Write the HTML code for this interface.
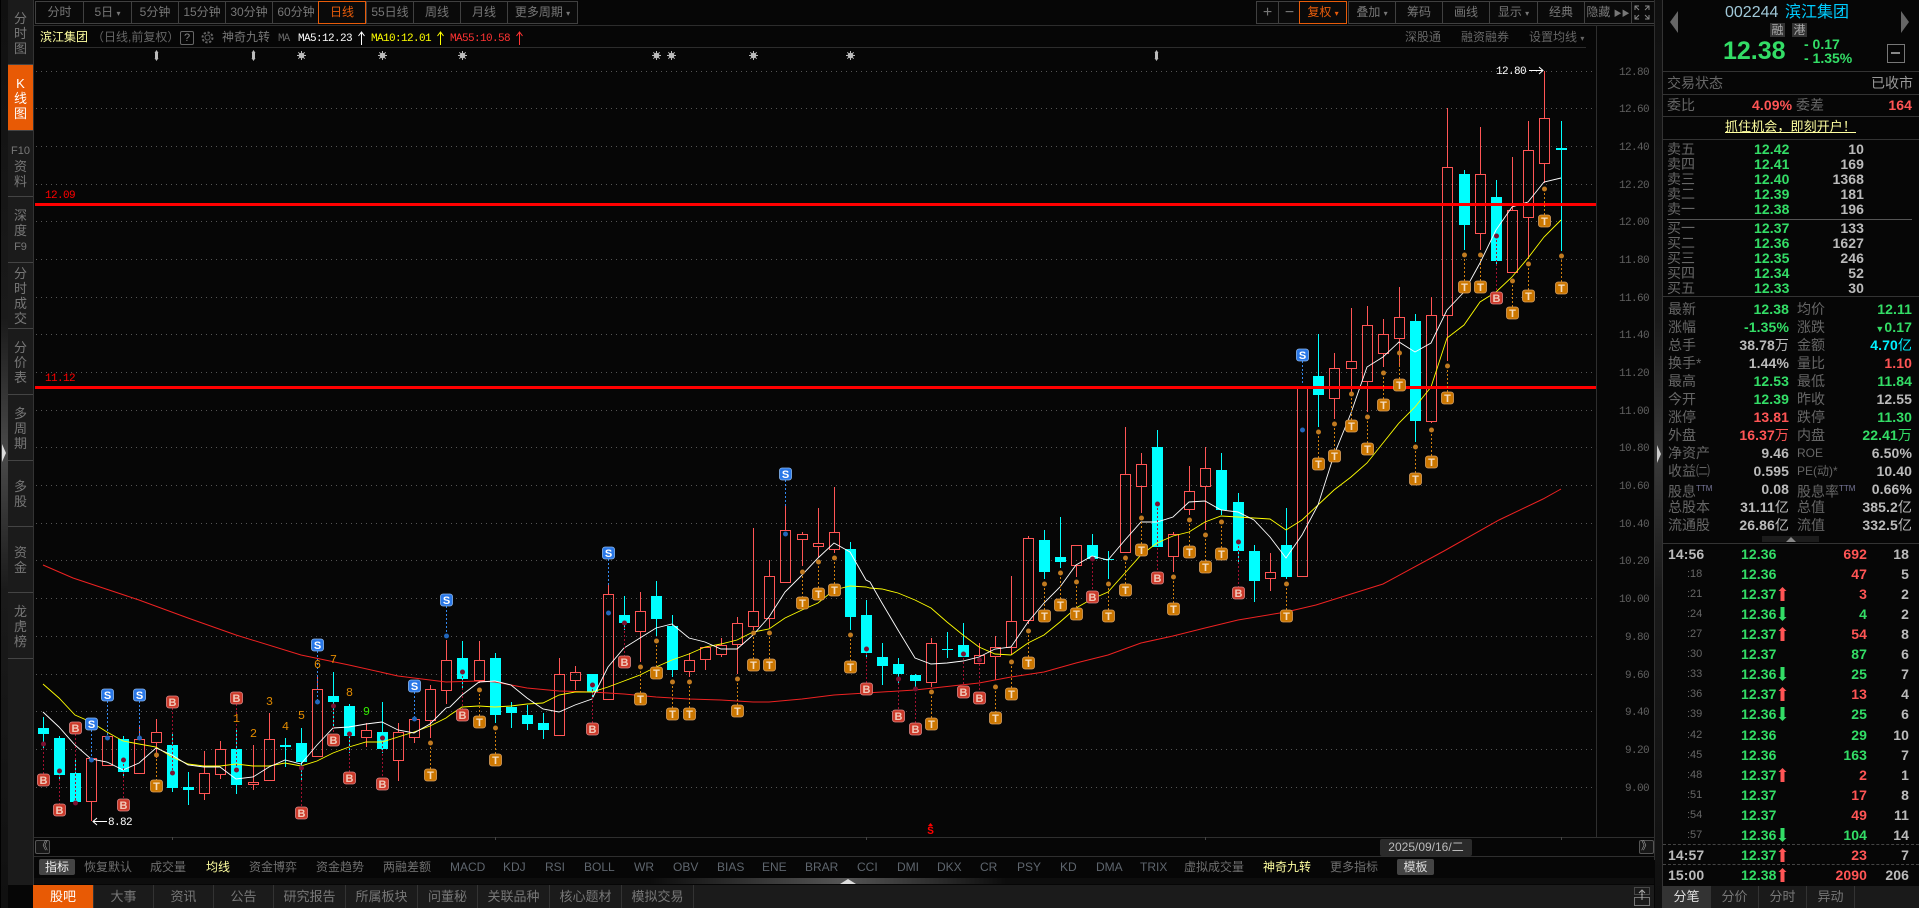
<!DOCTYPE html>
<html lang="zh-CN"><head><meta charset="utf-8"><title>滨江集团</title>
<style>
html,body{margin:0;padding:0;background:#060606;width:1919px;height:908px;overflow:hidden}
body{position:relative;font-family:"Liberation Sans","WenQuanYi Zen Hei","Noto Sans CJK SC",sans-serif;font-size:12px;color:#777}
div,span{position:absolute;white-space:nowrap}
.btn{top:1px;height:21px;line-height:21px;text-align:center;border:1px solid #404040;border-right:0;box-sizing:content-box;color:#777;font-size:12px;background:#0a0a0a}
.on{border:1px solid #e85c0a;color:#e85c0a;z-index:2}
.side{left:8px;width:25px;text-align:center;line-height:15px;font-size:13px;color:#777;background:#1b1b1b;border-bottom:1px solid #444;box-sizing:border-box}
.side b{font-weight:normal;font-size:11px}
.ind{top:860px;line-height:14px;font-size:12px;color:#6f6f6f}
.lat{color:#5f666e}
.tab{top:885px;height:23px;line-height:23px;text-align:center;border-right:1px solid #333;box-sizing:border-box;font-size:13px;color:#777}
.p{line-height:18px;font-size:14px}
.l{color:#666;font-size:14px}
.n{font-weight:bold;color:#bbb;letter-spacing:.1px}
.g{color:#33dd66}.rd{color:#ff5555}.c{color:#00f0ff}
.ln{left:1663px;width:256px;height:1px;background:#333}
.bl{left:1667px;color:#666;font-size:14px;line-height:15px}
svg text{font-family:"Liberation Mono","WenQuanYi Zen Hei",monospace}
.ax text{fill:#606060;font-size:11px;letter-spacing:-.6px}
.tag text{font-family:"Liberation Sans",sans-serif;font-size:11px;font-weight:bold;text-anchor:middle}
</style></head><body>

<!-- far-left strip -->
<div style="left:0;top:0;width:1px;height:908px;background:#000"></div>
<div style="left:1px;top:0;width:7px;height:908px;background:linear-gradient(#101010,#1a1a1a 35%,#4a4a4a 50%,#1a1a1a 65%,#101010)"></div>
<svg style="position:absolute;left:0;top:440px" width="8" height="26"><path d="M2 4 L6 13 L2 22Z" fill="#ddd"/></svg>

<!-- side tabs -->
<div class="side" style="top:0;height:65px;padding-top:11px">分<br>时<br>图</div>
<div class="side" style="top:65px;height:66px;padding-top:11px;background:#e85a05;color:#fff">K<br>线<br>图</div>
<div class="side" style="top:131px;height:66px;padding-top:11px"><b>F10</b><br>资<br>料</div>
<div class="side" style="top:197px;height:66px;padding-top:11px">深<br>度<br><b>F9</b></div>
<div class="side" style="top:263px;height:66px;padding-top:3px">分<br>时<br>成<br>交</div>
<div class="side" style="top:329px;height:66px;padding-top:11px">分<br>价<br>表</div>
<div class="side" style="top:395px;height:66px;padding-top:11px">多<br>周<br>期</div>
<div class="side" style="top:461px;height:66px;padding-top:18px">多<br>股</div>
<div class="side" style="top:527px;height:66px;padding-top:18px">资<br>金</div>
<div class="side" style="top:593px;height:66px;padding-top:11px">龙<br>虎<br>榜</div>
<div class="side" style="top:659px;height:226px;border:0"></div>
<div style="left:33px;top:0;width:1px;height:885px;background:#333"></div>

<!-- top bars -->
<div style="left:34px;top:25px;width:1620px;height:1px;background:#2c2c2c"></div>
<div class="btn" style="left:35px;width:47px">分时</div>
<div class="btn" style="left:83px;width:47px">5日 <small style="font-size:8px">▾</small></div>
<div class="btn" style="left:131px;width:46px">5分钟</div>
<div class="btn" style="left:178px;width:46px">15分钟</div>
<div class="btn" style="left:225px;width:46px">30分钟</div>
<div class="btn" style="left:272px;width:46px">60分钟</div>
<div class="btn on" style="left:318px;width:46px">日线</div>
<div class="btn" style="left:366px;width:46px">55日线</div>
<div class="btn" style="left:413px;width:46px">周线</div>
<div class="btn" style="left:460px;width:46px">月线</div>
<div class="btn" style="left:507px;width:69px;border-right:1px solid #404040">更多周期 <small style="font-size:8px">▾</small></div>

<div class="btn" style="left:1256px;width:21px;font-size:16px">+</div>
<div class="btn" style="left:1278px;width:21px;font-size:16px">−</div>
<div class="btn on" style="left:1299px;width:46px">复权 <small style="font-size:8px">▾</small></div>
<div class="btn" style="left:1348px;width:46px">叠加 <small style="font-size:8px">▾</small></div>
<div class="btn" style="left:1395px;width:46px">筹码</div>
<div class="btn" style="left:1442px;width:46px">画线</div>
<div class="btn" style="left:1489px;width:47px">显示 <small style="font-size:8px">▾</small></div>
<div class="btn" style="left:1537px;width:46px">经典</div>
<div class="btn" style="left:1584px;width:46px">隐藏 <small style="font-size:8px">▶▶</small></div>
<div class="btn" style="left:1631px;width:22px;border-right:1px solid #404040"></div>
<svg style="position:absolute;left:1634px;top:5px" width="16" height="15" fill="none" stroke="#888"><path d="M1 5V1H5M11 1H15V5M15 10V14H11M5 14H1V10M1 1L5 5M15 1L11 5M15 14L11 10M1 14L5 10"/></svg>

<!-- second row -->
<div style="left:40px;top:30px;line-height:15px;font-size:12px;color:#ffffa0">滨江集团</div>
<div style="left:92px;top:30px;line-height:15px;font-size:12px;color:#666">（日线,前复权）</div>
<div style="left:180px;top:31px;width:12px;height:12px;border:1px solid #666;border-radius:2px;line-height:12px;text-align:center;color:#888;font-size:11px">?</div>
<svg style="position:absolute;left:200px;top:30px" width="15" height="15" fill="none" stroke="#666"><circle cx="7.5" cy="7.5" r="2.5"/><circle cx="7.5" cy="7.5" r="5" stroke-width="2" stroke-dasharray="2.2 1.7"/></svg>
<div style="left:222px;top:30px;line-height:15px;font-size:12px;color:#777">神奇九转</div>
<div style="left:1405px;top:30px;line-height:15px;font-size:12px;color:#666">深股通</div>
<div style="left:1461px;top:30px;line-height:15px;font-size:12px;color:#666">融资融券</div>
<div style="left:1529px;top:30px;line-height:15px;font-size:12px;color:#666">设置均线 <small style="font-size:8px">▾</small></div>
<div style="left:40px;top:47px;width:1546px;height:1px;background:#2c2c2c"></div>

<!-- chart -->
<svg style="position:absolute;left:0;top:0" width="1660" height="860" shape-rendering="crispEdges">
<g fill="#606060" font-size="11"><text x="278" y="41" fill="#666" font-size="11" letter-spacing="-1">MA</text></g>
<text x="298" y="41" fill="#fff" font-size="11" letter-spacing="-.6">MA5:12.23</text>
<text x="371" y="41" fill="#ff0" font-size="11" letter-spacing="-.6">MA10:12.01</text>
<text x="450" y="41" fill="#f33" font-size="11" letter-spacing="-.6">MA55:10.58</text>
<g fill="none" shape-rendering="auto"><path d="M361.5 45V32M358.5 36L361.5 32L364.5 36" stroke="#fff"/><path d="M440.5 45V32M437.5 36L440.5 32L443.5 36" stroke="#ff0"/><path d="M519.5 45V32M516.5 36L519.5 32L522.5 36" stroke="#f33"/></g>

<!-- grid -->
<path stroke="#555" stroke-dasharray="1 4" fill="none" d="M36 71.5H1600M36 108.5H1600M36 146.5H1600M36 184.5H1600M36 221.5H1600M36 259.5H1600M36 297.5H1600M36 334.5H1600M36 372.5H1600M36 410.5H1600M36 447.5H1600M36 485.5H1600M36 523.5H1600M36 560.5H1600M36 598.5H1600M36 636.5H1600M36 674.5H1600M36 711.5H1600M36 749.5H1600M36 787.5H1600"/>
<path stroke="#2e2e2e" d="M1596.5 26V837M34 837.5H1654M34 856.5H1654M34 877.5H1654M34 884.5H1654M1654.5 0V908"/>
<path stroke="#444" d="M172.5 837V840M495.5 837V840M866.5 837V840M1205.5 837V840M1561.5 837V840"/>

<g class="ax">
<text x="1619" y="75">12.80</text><text x="1619" y="112">12.60</text><text x="1619" y="150">12.40</text><text x="1619" y="188">12.20</text><text x="1619" y="225">12.00</text><text x="1619" y="263">11.80</text><text x="1619" y="301">11.60</text><text x="1619" y="338">11.40</text><text x="1619" y="376">11.20</text><text x="1619" y="414">11.00</text><text x="1619" y="451">10.80</text><text x="1619" y="489">10.60</text><text x="1619" y="527">10.40</text><text x="1619" y="564">10.20</text><text x="1619" y="602">10.00</text><text x="1625" y="640">9.80</text><text x="1625" y="678">9.60</text><text x="1625" y="715">9.40</text><text x="1625" y="753">9.20</text><text x="1625" y="791">9.00</text>
</g>

<!-- red candles -->
<path fill="none" stroke="#ff5555" d="
M91.5 801V821M86.5 758.5H96.5V801.5H86.5Z
M102.5 736.5H112.5V765.5H102.5Z
M139.5 726V739M134.5 739.5H144.5V773.5H134.5Z
M156.5 719V732M156.5 742V758M151.5 732.5H161.5V742.5H151.5Z
M204.5 751V773M204.5 793V800M199.5 773.5H209.5V793.5H199.5Z
M220.5 741V749M220.5 774V779M215.5 749.5H225.5V774.5H215.5Z
M253.5 745V782M253.5 784V790M248.5 782.5H258.5V784.5H248.5Z
M269.5 713V739M264.5 739.5H274.5V780.5H264.5Z
M317.5 677V689M312.5 689.5H322.5V756.5H312.5Z
M366.5 723V730M366.5 737V747M361.5 730.5H371.5V737.5H361.5Z
M398.5 723V732M398.5 760V781M393.5 732.5H403.5V760.5H393.5Z
M414.5 737V743M409.5 719.5H419.5V737.5H409.5Z
M430.5 685V689M430.5 720V738M425.5 689.5H435.5V720.5H425.5Z
M446.5 640V660M446.5 690V704M441.5 660.5H451.5V690.5H441.5Z
M479.5 641V660M479.5 680V683M474.5 660.5H484.5V680.5H474.5Z
M559.5 658V674M554.5 674.5H564.5V735.5H554.5Z
M575.5 666V672M575.5 680V690M570.5 672.5H580.5V680.5H570.5Z
M608.5 585V594M603.5 594.5H613.5V699.5H603.5Z
M640.5 592V611M640.5 631V662M635.5 611.5H645.5V631.5H635.5Z
M689.5 653V660M689.5 671V677M684.5 660.5H694.5V671.5H684.5Z
M705.5 659V670M700.5 647.5H710.5V659.5H700.5Z
M721.5 638V645M721.5 654V657M716.5 645.5H726.5V654.5H716.5Z
M737.5 617V623M737.5 644V674M732.5 623.5H742.5V644.5H732.5Z
M753.5 528V611M753.5 626V630M748.5 611.5H758.5V626.5H748.5Z
M769.5 560V576M769.5 618V628M764.5 576.5H774.5V618.5H764.5Z
M785.5 506V530M785.5 582V583M780.5 530.5H790.5V582.5H780.5Z
M802.5 532V534M802.5 539V566M797.5 534.5H807.5V539.5H797.5Z
M818.5 508V543M818.5 546V557M813.5 543.5H823.5V546.5H813.5Z
M834.5 487V532M834.5 549V553M829.5 532.5H839.5V549.5H829.5Z
M931.5 638V643M931.5 682V687M926.5 643.5H936.5V682.5H926.5Z
M979.5 643V655M974.5 655.5H984.5V663.5H974.5Z
M995.5 636V647M995.5 656V680M990.5 647.5H1000.5V656.5H990.5Z
M1011.5 576V621M1011.5 647V655M1006.5 621.5H1016.5V647.5H1006.5Z
M1028.5 536V538M1028.5 620V624M1023.5 538.5H1033.5V620.5H1023.5Z
M1076.5 565V577M1071.5 545.5H1081.5V565.5H1071.5Z
M1125.5 427V474M1120.5 474.5H1130.5V552.5H1120.5Z
M1141.5 453V464M1141.5 486V513M1136.5 464.5H1146.5V486.5H1136.5Z
M1173.5 532V534M1173.5 556V572M1168.5 534.5H1178.5V556.5H1168.5Z
M1189.5 466V491M1189.5 509V515M1184.5 491.5H1194.5V509.5H1184.5Z
M1205.5 447V468M1205.5 486V530M1200.5 468.5H1210.5V486.5H1200.5Z
M1270.5 553V572M1270.5 578V591M1265.5 572.5H1275.5V578.5H1265.5Z
M1297.5 386.5H1307.5V576.5H1297.5Z
M1334.5 353V368M1334.5 398V419M1329.5 368.5H1339.5V398.5H1329.5Z
M1351.5 308V361M1351.5 368V393M1346.5 361.5H1356.5V368.5H1346.5Z
M1367.5 306V325M1367.5 381V412M1362.5 325.5H1372.5V381.5H1362.5Z
M1383.5 319V334M1383.5 353V367M1378.5 334.5H1388.5V353.5H1378.5Z
M1399.5 287V317M1399.5 338V367M1394.5 317.5H1404.5V338.5H1394.5Z
M1431.5 297V315M1431.5 421V423M1426.5 315.5H1436.5V421.5H1426.5Z
M1447.5 108V167M1447.5 315V361M1442.5 167.5H1452.5V315.5H1442.5Z
M1480.5 127V174M1480.5 233V250M1475.5 174.5H1485.5V233.5H1475.5Z
M1512.5 157V210M1507.5 210.5H1517.5V272.5H1507.5Z
M1528.5 121V150M1528.5 217V259M1523.5 150.5H1533.5V217.5H1523.5Z
M1544.5 71V118M1544.5 163V183M1539.5 118.5H1549.5V163.5H1539.5Z"/>

<!-- cyan candles -->
<path fill="none" stroke="#00ffff" d="M43.5 717V749M59.5 736V779M75.5 760V803M123.5 736V777M172.5 734V792M188.5 772V805M236.5 730V794M285.5 738V767M301.5 728V781M333.5 672V728M349.5 704V753M382.5 702V753M462.5 641V690M495.5 653V723M511.5 702V728M527.5 705V730M543.5 713V739M592.5 674V698M624.5 596V630M656.5 581V636M672.5 615V677M850.5 542V630M866.5 600V657M882.5 643V685M898.5 658V685M915.5 674V690M947.5 632V658M963.5 623V657M1044.5 530V579M1060.5 517V568M1092.5 534V560M1108.5 551V579M1157.5 430V547M1221.5 453V515M1238.5 493V562M1254.5 545V602M1286.5 508V579M1318.5 334V427M1415.5 314V442M1464.5 170V250M1496.5 180V266M1561.5 121V251"/>
<path fill="#00ffff" d="M38 728h11v6h-11zM54 738h11v37h-11zM70 773h11v29h-11zM118 739h11v33h-11zM167 745h11v43h-11zM183 787h11v3h-11zM231 749h11v36h-11zM280 745h11v2h-11zM296 743h11v19h-11zM328 696h11v6h-11zM344 706h11v30h-11zM377 732h11v17h-11zM457 658h11v21h-11zM490 658h11v57h-11zM506 707h11v6h-11zM522 715h11v9h-11zM538 723h11v7h-11zM587 674h11v18h-11zM619 615h11v8h-11zM651 596h11v23h-11zM667 626h11v44h-11zM845 549h11v68h-11zM861 615h11v38h-11zM877 657h11v9h-11zM893 664h11v10h-11zM910 675h11v6h-11zM942 649h11v1h-11zM958 645h11v12h-11zM1039 540h11v32h-11zM1055 557h11v5h-11zM1087 545h11v14h-11zM1103 559h11v1h-11zM1152 447h11v100h-11zM1216 470h11v40h-11zM1233 502h11v49h-11zM1249 551h11v30h-11zM1281 545h11v32h-11zM1313 376h11v19h-11zM1410 321h11v100h-11zM1459 174h11v51h-11zM1491 197h11v64h-11zM1556 148h11v2h-11z"/>

<!-- MAs -->
<g fill="none" shape-rendering="auto">
<polyline stroke="#ee2222" stroke-width="1" points="43,565 73,578 139,600 188,618 236,635 301,655 349,665 398,676 446,682 479,681 495,682 527,688 559,691 592,692 624,694 656,697 689,699 721,700 753,702 769,702 802,699 834,695 866,693 915,690 979,683 1011,677 1044,672 1076,663 1108,655 1141,643 1173,636 1205,628 1238,620 1286,612 1316,605 1383,584 1444,551 1499,520 1543,499 1561,489"/>
<polyline stroke="#ffff00" stroke-width=".9" points="43,684 59,698 75,715 91,722 107,732 123,741 139,744 156,747 172,757 188,764 204,766 220,766 236,764 253,766 269,766 285,763 301,766 317,761 333,753 349,747 366,742 382,742 398,737 414,732 430,726 446,718 450,715 462,707 479,706 495,707 511,706 527,704 543,703 559,695 575,692 592,692 608,687 624,681 640,675 656,667 672,660 689,654 705,647 721,644 737,640 753,632 769,629 785,618 802,610 818,603 834,590 850,586 866,587 870,588 882,589 898,593 915,600 931,608 947,622 963,635 979,647 995,654 1011,655 1028,643 1044,635 1060,622 1076,608 1092,599 1108,592 1125,573 1141,555 1157,543 1173,536 1189,532 1205,522 1221,516 1238,517 1254,518 1270,519 1286,530 1302,520 1318,505 1334,490 1351,477 1367,463 1383,443 1399,423 1415,407 1431,387 1447,338 1464,325 1480,302 1496,292 1512,277 1528,258 1544,237 1561,220"/>
<polyline stroke="#ffffff" stroke-width=".9" points="43,712 59,727 75,745 91,759 107,762 123,770 139,763 156,748 172,755 188,765 204,767 220,767 236,779 253,777 269,767 285,760 301,764 317,745 333,728 349,727 366,724 382,722 398,730 414,733 430,724 446,708 450,707 462,695 479,682 495,681 511,685 527,698 543,709 559,712 575,705 592,699 608,667 624,648 640,638 656,628 672,624 689,638 705,642 721,649 737,649 753,635 769,617 785,592 802,575 818,558 834,543 850,552 866,580 870,582 882,603 898,630 915,658 931,664 947,663 963,661 979,657 995,649 1011,647 1028,622 1044,603 1060,587 1076,565 1092,556 1108,560 1125,540 1141,522 1157,522 1173,517 1189,502 1205,501 1221,510 1238,512 1254,520 1270,537 1286,558 1302,535 1318,505 1334,455 1351,413 1367,367 1383,357 1399,342 1415,352 1431,343 1447,310 1464,292 1480,263 1496,230 1512,207 1528,202 1544,182 1561,178"/>
</g>

<!-- levels -->
<rect x="35" y="203" width="1561" height="3" fill="#ff0000"/>
<rect x="35" y="386" width="1561" height="3" fill="#ff0000"/>
<text x="45" y="198" fill="#f00" font-size="11" letter-spacing="-.6">12.09</text>
<text x="45" y="381" fill="#f00" font-size="11" letter-spacing="-.6">11.12</text>

<!-- marker connectors -->
<g fill="none" stroke-dasharray="2 2">
<path stroke="#a01030" d="M43.5 744V774M59.5 771V804M75.5 734V803M123.5 760V799M172.5 708V773M236.5 704V770M301.5 768V807M333.5 706V734M349.5 734V772M382.5 738V778M462.5 672V709M592.5 685V723M624.5 623V656M866.5 649V683M898.5 679V710M915.5 689V723M963.5 654V686M979.5 660V692M1092.5 559V591M1157.5 504V572M1238.5 542V587M1496.5 236V292"/>
<path stroke="#d08010" d="M156.5 755V780M430.5 743V769M479.5 690V716M495.5 728V754M640.5 667V693M656.5 641V667M672.5 682V708M689.5 682V708M737.5 679V705M753.5 633V659M769.5 633V659M802.5 572V597M818.5 562V588M834.5 558V584M850.5 635V661M931.5 692V718M995.5 687V712M1011.5 662V688M1028.5 631V657M1044.5 584V610M1060.5 573V599M1076.5 582V608M1108.5 584V610M1125.5 558V584M1141.5 518V544M1173.5 577V603M1189.5 520V546M1205.5 535V561M1221.5 522V548M1286.5 584V610M1318.5 432V458M1334.5 424V450M1351.5 394V420M1367.5 417V443M1383.5 373V399M1399.5 353V379M1415.5 447V473M1431.5 430V456M1447.5 366V392M1464.5 255V281M1480.5 255V281M1512.5 281V307M1528.5 264V290M1544.5 189V215M1561.5 256V282"/>
<path stroke="#3388ee" d="M91.5 730V760M107.5 701V738M139.5 701V738M317.5 651V702M414.5 692V719M446.5 606V636M608.5 559V585M785.5 480V506M1302.5 361V383"/>
</g>
<g shape-rendering="auto">
<g fill="#7a1030"><circle cx="43.5" cy="744" r="2.5"/><circle cx="59.5" cy="771" r="2.5"/><circle cx="75.5" cy="803" r="2.5"/><circle cx="123.5" cy="760" r="2.5"/><circle cx="172.5" cy="773" r="2.5"/><circle cx="236.5" cy="770" r="2.5"/><circle cx="301.5" cy="768" r="2.5"/><circle cx="333.5" cy="706" r="2.5"/><circle cx="349.5" cy="734" r="2.5"/><circle cx="382.5" cy="738" r="2.5"/><circle cx="462.5" cy="672" r="2.5"/><circle cx="592.5" cy="685" r="2.5"/><circle cx="624.5" cy="623" r="2.5"/><circle cx="866.5" cy="649" r="2.5"/><circle cx="898.5" cy="679" r="2.5"/><circle cx="915.5" cy="689" r="2.5"/><circle cx="963.5" cy="654" r="2.5"/><circle cx="979.5" cy="660" r="2.5"/><circle cx="1092.5" cy="559" r="2.5"/><circle cx="1157.5" cy="504" r="2.5"/><circle cx="1238.5" cy="542" r="2.5"/><circle cx="1496.5" cy="236" r="2.5"/></g>
<g fill="#c07a20"><circle cx="156.5" cy="755" r="2.5"/><circle cx="430.5" cy="743" r="2.5"/><circle cx="479.5" cy="690" r="2.5"/><circle cx="495.5" cy="728" r="2.5"/><circle cx="640.5" cy="667" r="2.5"/><circle cx="656.5" cy="641" r="2.5"/><circle cx="672.5" cy="682" r="2.5"/><circle cx="689.5" cy="682" r="2.5"/><circle cx="737.5" cy="679" r="2.5"/><circle cx="753.5" cy="633" r="2.5"/><circle cx="769.5" cy="633" r="2.5"/><circle cx="802.5" cy="572" r="2.5"/><circle cx="818.5" cy="562" r="2.5"/><circle cx="834.5" cy="558" r="2.5"/><circle cx="850.5" cy="635" r="2.5"/><circle cx="931.5" cy="692" r="2.5"/><circle cx="995.5" cy="687" r="2.5"/><circle cx="1011.5" cy="662" r="2.5"/><circle cx="1028.5" cy="631" r="2.5"/><circle cx="1044.5" cy="584" r="2.5"/><circle cx="1060.5" cy="573" r="2.5"/><circle cx="1076.5" cy="582" r="2.5"/><circle cx="1108.5" cy="584" r="2.5"/><circle cx="1125.5" cy="558" r="2.5"/><circle cx="1141.5" cy="518" r="2.5"/><circle cx="1173.5" cy="577" r="2.5"/><circle cx="1189.5" cy="520" r="2.5"/><circle cx="1205.5" cy="535" r="2.5"/><circle cx="1221.5" cy="522" r="2.5"/><circle cx="1286.5" cy="584" r="2.5"/><circle cx="1318.5" cy="432" r="2.5"/><circle cx="1334.5" cy="424" r="2.5"/><circle cx="1351.5" cy="394" r="2.5"/><circle cx="1367.5" cy="417" r="2.5"/><circle cx="1383.5" cy="373" r="2.5"/><circle cx="1399.5" cy="353" r="2.5"/><circle cx="1415.5" cy="447" r="2.5"/><circle cx="1431.5" cy="430" r="2.5"/><circle cx="1447.5" cy="366" r="2.5"/><circle cx="1464.5" cy="255" r="2.5"/><circle cx="1480.5" cy="255" r="2.5"/><circle cx="1512.5" cy="281" r="2.5"/><circle cx="1528.5" cy="264" r="2.5"/><circle cx="1544.5" cy="189" r="2.5"/><circle cx="1561.5" cy="256" r="2.5"/></g>
<g fill="#2266bb"><circle cx="91.5" cy="760" r="2.5"/><circle cx="107.5" cy="738" r="2.5"/><circle cx="139.5" cy="738" r="2.5"/><circle cx="317.5" cy="702" r="2.5"/><circle cx="414.5" cy="719" r="2.5"/><circle cx="446.5" cy="636" r="2.5"/><circle cx="608.5" cy="613" r="2.5"/><circle cx="785.5" cy="534" r="2.5"/><circle cx="1302.5" cy="430" r="2.5"/></g>
<defs>
<rect id="rB" x="-6" y="-6" width="12" height="12" rx="2.5" fill="#cc3a2a" stroke="#d88" stroke-width=".8"/>
<rect id="rT" x="-6" y="-6" width="12" height="12" rx="2.5" fill="#cc7700" stroke="#d9a060" stroke-width=".8"/>
<rect id="rS" x="-6" y="-6" width="12" height="12" rx="2.5" fill="#2a78e8" stroke="#8ab8f0" stroke-width=".8"/>
</defs>
<g class="tag" fill="#f0c8b8">
<use href="#rB" x="43.5" y="780"/><text x="43.5" y="784">B</text>
<use href="#rB" x="59.5" y="810"/><text x="59.5" y="814">B</text>
<use href="#rB" x="75.5" y="728"/><text x="75.5" y="732">B</text>
<use href="#rB" x="123.5" y="805"/><text x="123.5" y="809">B</text>
<use href="#rB" x="172.5" y="702"/><text x="172.5" y="706">B</text>
<use href="#rB" x="236.5" y="698"/><text x="236.5" y="702">B</text>
<use href="#rB" x="301.5" y="813"/><text x="301.5" y="817">B</text>
<use href="#rB" x="333.5" y="740"/><text x="333.5" y="744">B</text>
<use href="#rB" x="349.5" y="778"/><text x="349.5" y="782">B</text>
<use href="#rB" x="382.5" y="784"/><text x="382.5" y="788">B</text>
<use href="#rB" x="462.5" y="715"/><text x="462.5" y="719">B</text>
<use href="#rB" x="592.5" y="729"/><text x="592.5" y="733">B</text>
<use href="#rB" x="624.5" y="662"/><text x="624.5" y="666">B</text>
<use href="#rB" x="866.5" y="689"/><text x="866.5" y="693">B</text>
<use href="#rB" x="898.5" y="716"/><text x="898.5" y="720">B</text>
<use href="#rB" x="915.5" y="729"/><text x="915.5" y="733">B</text>
<use href="#rB" x="963.5" y="692"/><text x="963.5" y="696">B</text>
<use href="#rB" x="979.5" y="698"/><text x="979.5" y="702">B</text>
<use href="#rB" x="1092.5" y="597"/><text x="1092.5" y="601">B</text>
<use href="#rB" x="1157.5" y="578"/><text x="1157.5" y="582">B</text>
<use href="#rB" x="1238.5" y="593"/><text x="1238.5" y="597">B</text>
<use href="#rB" x="1496.5" y="298"/><text x="1496.5" y="302">B</text>
</g>
<g class="tag" fill="#f5dcc0">
<use href="#rT" x="156.5" y="786"/><text x="156.5" y="790">T</text>
<use href="#rT" x="430.5" y="775"/><text x="430.5" y="779">T</text>
<use href="#rT" x="479.5" y="722"/><text x="479.5" y="726">T</text>
<use href="#rT" x="495.5" y="760"/><text x="495.5" y="764">T</text>
<use href="#rT" x="640.5" y="699"/><text x="640.5" y="703">T</text>
<use href="#rT" x="656.5" y="673"/><text x="656.5" y="677">T</text>
<use href="#rT" x="672.5" y="714"/><text x="672.5" y="718">T</text>
<use href="#rT" x="689.5" y="714"/><text x="689.5" y="718">T</text>
<use href="#rT" x="737.5" y="711"/><text x="737.5" y="715">T</text>
<use href="#rT" x="753.5" y="665"/><text x="753.5" y="669">T</text>
<use href="#rT" x="769.5" y="665"/><text x="769.5" y="669">T</text>
<use href="#rT" x="802.5" y="603"/><text x="802.5" y="607">T</text>
<use href="#rT" x="818.5" y="594"/><text x="818.5" y="598">T</text>
<use href="#rT" x="834.5" y="590"/><text x="834.5" y="594">T</text>
<use href="#rT" x="850.5" y="667"/><text x="850.5" y="671">T</text>
<use href="#rT" x="931.5" y="724"/><text x="931.5" y="728">T</text>
<use href="#rT" x="995.5" y="718"/><text x="995.5" y="722">T</text>
<use href="#rT" x="1011.5" y="694"/><text x="1011.5" y="698">T</text>
<use href="#rT" x="1028.5" y="663"/><text x="1028.5" y="667">T</text>
<use href="#rT" x="1044.5" y="616"/><text x="1044.5" y="620">T</text>
<use href="#rT" x="1060.5" y="605"/><text x="1060.5" y="609">T</text>
<use href="#rT" x="1076.5" y="614"/><text x="1076.5" y="618">T</text>
<use href="#rT" x="1108.5" y="616"/><text x="1108.5" y="620">T</text>
<use href="#rT" x="1125.5" y="590"/><text x="1125.5" y="594">T</text>
<use href="#rT" x="1141.5" y="550"/><text x="1141.5" y="554">T</text>
<use href="#rT" x="1173.5" y="609"/><text x="1173.5" y="613">T</text>
<use href="#rT" x="1189.5" y="552"/><text x="1189.5" y="556">T</text>
<use href="#rT" x="1205.5" y="567"/><text x="1205.5" y="571">T</text>
<use href="#rT" x="1221.5" y="554"/><text x="1221.5" y="558">T</text>
<use href="#rT" x="1286.5" y="616"/><text x="1286.5" y="620">T</text>
<use href="#rT" x="1318.5" y="464"/><text x="1318.5" y="468">T</text>
<use href="#rT" x="1334.5" y="456"/><text x="1334.5" y="460">T</text>
<use href="#rT" x="1351.5" y="426"/><text x="1351.5" y="430">T</text>
<use href="#rT" x="1367.5" y="449"/><text x="1367.5" y="453">T</text>
<use href="#rT" x="1383.5" y="405"/><text x="1383.5" y="409">T</text>
<use href="#rT" x="1399.5" y="385"/><text x="1399.5" y="389">T</text>
<use href="#rT" x="1415.5" y="479"/><text x="1415.5" y="483">T</text>
<use href="#rT" x="1431.5" y="462"/><text x="1431.5" y="466">T</text>
<use href="#rT" x="1447.5" y="398"/><text x="1447.5" y="402">T</text>
<use href="#rT" x="1464.5" y="287"/><text x="1464.5" y="291">T</text>
<use href="#rT" x="1480.5" y="287"/><text x="1480.5" y="291">T</text>
<use href="#rT" x="1512.5" y="313"/><text x="1512.5" y="317">T</text>
<use href="#rT" x="1528.5" y="296"/><text x="1528.5" y="300">T</text>
<use href="#rT" x="1544.5" y="221"/><text x="1544.5" y="225">T</text>
<use href="#rT" x="1561.5" y="288"/><text x="1561.5" y="292">T</text>
</g>
<g class="tag" fill="#fff">
<use href="#rS" x="91.5" y="724"/><text x="91.5" y="728">S</text>
<use href="#rS" x="107.5" y="695"/><text x="107.5" y="699">S</text>
<use href="#rS" x="139.5" y="695"/><text x="139.5" y="699">S</text>
<use href="#rS" x="317.5" y="645"/><text x="317.5" y="649">S</text>
<use href="#rS" x="414.5" y="686"/><text x="414.5" y="690">S</text>
<use href="#rS" x="446.5" y="600"/><text x="446.5" y="604">S</text>
<use href="#rS" x="608.5" y="553"/><text x="608.5" y="557">S</text>
<use href="#rS" x="785.5" y="474"/><text x="785.5" y="478">S</text>
<use href="#rS" x="1302.5" y="355"/><text x="1302.5" y="359">S</text>
</g>
<!-- nine turn digits -->
<g font-size="12" text-anchor="middle" fill="#e08a00" style="font-family:'Liberation Sans',sans-serif">
<text x="236.5" y="722">1</text><text x="253.5" y="737">2</text><text x="269.5" y="705">3</text><text x="285.5" y="730">4</text><text x="301.5" y="719">5</text><text x="317.5" y="668">6</text><text x="333.5" y="663">7</text><text x="349.5" y="696">8</text><text x="366.5" y="715" fill="#33ee00">9</text>
</g>
<!-- extreme labels -->
<text x="1496" y="74" fill="#fff" font-size="11" letter-spacing="-.6">12.80</text>
<path d="M1529 70.5H1543M1539 67L1543 70.5L1539 74" fill="none" stroke="#fff"/>
<text x="108" y="825" fill="#fff" font-size="11" letter-spacing="-.6">8.82</text>
<path d="M93 821.5H107M97 818L93 821.5L97 825" fill="none" stroke="#fff"/>
<!-- info stars -->
<g fill="#bbb">
<rect x="155" y="53" width="3" height="5"/><path d="M156.500 50l2 3h-4zM156.500 61l2-3h-4z"/>
<rect x="252" y="53" width="3" height="5"/><path d="M253.500 50l2 3h-4zM253.500 61l2-3h-4z"/>
<rect x="1155" y="53" width="3" height="5"/><path d="M1156.500 50l2 3h-4zM1156.500 61l2-3h-4z"/>
<circle cx="301.500" cy="55.500" r="2.800"/><path d="M301.500 51V60M297 55.500H306M298.300 52.300L304.700 58.700M304.700 52.300L298.300 58.700" stroke="#bbb"/>
<circle cx="382.500" cy="55.500" r="2.800"/><path d="M382.500 51V60M378 55.500H387M379.300 52.300L385.700 58.700M385.700 52.300L379.300 58.700" stroke="#bbb"/>
<circle cx="462.500" cy="55.500" r="2.800"/><path d="M462.500 51V60M458 55.500H467M459.300 52.300L465.700 58.700M465.700 52.300L459.300 58.700" stroke="#bbb"/>
<circle cx="656.500" cy="55.500" r="2.800"/><path d="M656.500 51V60M652 55.500H661M653.300 52.300L659.700 58.700M659.700 52.300L653.300 58.700" stroke="#bbb"/>
<circle cx="671.500" cy="55.500" r="2.800"/><path d="M671.500 51V60M667 55.500H676M668.300 52.300L674.700 58.700M674.700 52.300L668.300 58.700" stroke="#bbb"/>
<circle cx="753.500" cy="55.500" r="2.800"/><path d="M753.500 51V60M749 55.500H758M750.300 52.300L756.700 58.700M756.700 52.300L750.300 58.700" stroke="#bbb"/>
<circle cx="850.500" cy="55.500" r="2.800"/><path d="M850.500 51V60M846 55.500H855M847.300 52.300L853.700 58.700M853.700 52.300L847.300 58.700" stroke="#bbb"/>
</g>
<!-- red S bottom -->
<path d="M930.500 823l2.500 3h-5z" fill="#f00"/>
<text x="930.500" y="834" fill="#f00" font-size="11" text-anchor="middle" font-weight="bold">S</text>
</g>
</svg>

<!-- x-axis row -->
<div style="left:35px;top:840px;width:13px;height:12px;border:1px solid #555;border-radius:2px;line-height:11px;font-size:11px;color:#999;text-align:center;background:#161616">《</div>
<div style="left:1639px;top:840px;width:13px;height:12px;border:1px solid #555;border-radius:2px;line-height:11px;font-size:11px;color:#999;text-align:center;background:#161616">》</div>
<div style="left:1380px;top:839px;width:92px;height:17px;line-height:17px;background:#2a2a2a;border-radius:2px;color:#bbb;text-align:center;font-size:12px">2025/09/16/二</div>

<!-- indicator row -->
<div class="ind" style="left:39px;top:859px;width:36px;height:16px;line-height:16px;text-align:center;background:#444;border-radius:2px;color:#eee">指标</div>
<div class="ind" style="left:84px">恢复默认</div><div class="ind" style="left:150px">成交量</div><div class="ind" style="left:206px;color:#ffffa0">均线</div><div class="ind" style="left:249px">资金博弈</div><div class="ind" style="left:316px">资金趋势</div><div class="ind" style="left:383px">两融差额</div>
<div class="ind lat" style="left:450px">MACD</div><div class="ind lat" style="left:503px">KDJ</div><div class="ind lat" style="left:545px">RSI</div><div class="ind lat" style="left:584px">BOLL</div><div class="ind lat" style="left:634px">WR</div><div class="ind lat" style="left:673px">OBV</div><div class="ind lat" style="left:717px">BIAS</div><div class="ind lat" style="left:762px">ENE</div><div class="ind lat" style="left:805px">BRAR</div><div class="ind lat" style="left:857px">CCI</div><div class="ind lat" style="left:897px">DMI</div><div class="ind lat" style="left:937px">DKX</div><div class="ind lat" style="left:980px">CR</div><div class="ind lat" style="left:1017px">PSY</div><div class="ind lat" style="left:1060px">KD</div><div class="ind lat" style="left:1096px">DMA</div><div class="ind lat" style="left:1140px">TRIX</div>
<div class="ind" style="left:1184px">虚拟成交量</div><div class="ind" style="left:1263px;color:#ffffa0">神奇九转</div><div class="ind" style="left:1330px">更多指标</div>
<div class="ind" style="left:1397px;top:859px;width:37px;height:16px;line-height:16px;text-align:center;background:#444;border-radius:2px;color:#ddd">模板</div>

<!-- strip -->
<div style="left:34px;top:878px;width:1620px;height:6px;background:linear-gradient(90deg,#0d0d0d 0,#0d0d0d 38%,#555 50%,#0d0d0d 60%,#0d0d0d 100%)"></div>
<svg style="position:absolute;left:838px;top:878px" width="22" height="6"><path d="M2 6L10 1L18 6Z" fill="#ddd"/></svg>

<!-- bottom tabs -->
<div style="left:33px;top:885px;width:1621px;height:23px;background:#1b1b1b"></div>
<div class="tab" style="left:33px;width:61px;background:#e85a05;color:#fff">股吧</div>
<div class="tab" style="left:94px;width:60px">大事</div><div class="tab" style="left:154px;width:60px">资讯</div><div class="tab" style="left:214px;width:60px">公告</div><div class="tab" style="left:274px;width:72px">研究报告</div><div class="tab" style="left:346px;width:72px">所属板块</div><div class="tab" style="left:418px;width:60px">问董秘</div><div class="tab" style="left:478px;width:72px">关联品种</div><div class="tab" style="left:550px;width:72px">核心题材</div><div class="tab" style="left:622px;width:72px">模拟交易</div>
<svg style="position:absolute;left:1634px;top:887px" width="17" height="19" fill="none" stroke="#777"><rect x=".5" y=".5" width="15" height="7" stroke-dasharray="1 1"/><rect x=".5" y="10.500" width="15" height="8"/><path d="M8 13V3M5 6L8 3L11 6" stroke="#aaa"/></svg>

<!-- right strip -->
<div style="left:1655px;top:0;width:7px;height:908px;background:linear-gradient(#101010,#1a1a1a 35%,#3a3a3a 50%,#1a1a1a 65%,#101010)"></div>
<svg style="position:absolute;left:1655px;top:444px" width="7" height="20"><path d="M2 1L6 10L2 19Z" fill="#ccc"/></svg>
<div style="left:1662px;top:0;width:1px;height:908px;background:#333"></div>

<!-- right header -->
<svg style="position:absolute;left:1668px;top:8px" width="246" height="28"><path d="M10 3V25L2 14Z" fill="#666"/><path d="M233 3V25L241 14Z" fill="#666"/></svg>
<div style="left:1725px;top:4px;line-height:17px;font-size:16px;color:#a0c8d8">002244</div>
<div style="left:1785px;top:4px;line-height:17px;font-size:16px;color:#00ccff">滨江集团</div>
<div style="left:1770px;top:23px;width:15px;height:14px;line-height:14px;text-align:center;background:#333;color:#aaa;font-size:12px">融</div>
<div style="left:1792px;top:23px;width:15px;height:14px;line-height:14px;text-align:center;background:#333;color:#aaa;font-size:12px">港</div>
<div class="g" style="left:1723px;top:37px;line-height:28px;font-size:25px;font-weight:bold">12.38</div>
<div class="g" style="left:1804px;top:37px;line-height:15px;font-size:14px;font-weight:bold">- 0.17</div>
<div class="g" style="left:1804px;top:51px;line-height:15px;font-size:14px;font-weight:bold">- 1.35%</div>
<div style="left:1887px;top:44px;width:16px;height:17px;border:1px solid #777"></div>
<div style="left:1891px;top:52px;width:9px;height:2px;background:#888"></div>
<div class="ln" style="top:71px"></div><div class="ln" style="top:94px"></div><div class="ln" style="top:116px"></div><div class="ln" style="top:139px"></div>

<div class="l" style="left:1667px;top:75px;line-height:16px">交易状态</div>
<div class="l" style="left:1871px;top:75px;line-height:16px;color:#999">已收市</div>
<div class="l" style="left:1667px;top:97px;line-height:16px">委比</div>
<div class="n rd" style="left:1752px;top:97px;line-height:16px;font-size:14px">4.09%</div>
<div class="l" style="left:1796px;top:97px;line-height:16px">委差</div>
<div class="n rd" style="right:7px;top:97px;line-height:16px;font-size:14px">164</div>
<div style="left:1725px;top:120px;line-height:14px;font-size:13px;color:#ffffa0;text-decoration:underline;letter-spacing:.1px">抓住机会，即刻开户！</div>

<!-- order book -->
<div class="bl" style="top:142px">卖五</div><div class="n g p" style="left:1754px;top:140px">12.42</div><div class="n p" style="right:55px;top:140px">10</div>
<div class="bl" style="top:157px">卖四</div><div class="n g p" style="left:1754px;top:155px">12.41</div><div class="n p" style="right:55px;top:155px">169</div>
<div class="bl" style="top:172px">卖三</div><div class="n g p" style="left:1754px;top:170px">12.40</div><div class="n p" style="right:55px;top:170px">1368</div>
<div class="bl" style="top:187px">卖二</div><div class="n g p" style="left:1754px;top:185px">12.39</div><div class="n p" style="right:55px;top:185px">181</div>
<div class="bl" style="top:202px">卖一</div><div class="n g p" style="left:1754px;top:200px">12.38</div><div class="n p" style="right:55px;top:200px">196</div>
<div style="left:1667px;top:219px;width:245px;height:1px;background:#555"></div>
<div class="bl" style="top:221px">买一</div><div class="n g p" style="left:1754px;top:219px">12.37</div><div class="n p" style="right:55px;top:219px">133</div>
<div class="bl" style="top:236px">买二</div><div class="n g p" style="left:1754px;top:234px">12.36</div><div class="n p" style="right:55px;top:234px">1627</div>
<div class="bl" style="top:251px">买三</div><div class="n g p" style="left:1754px;top:249px">12.35</div><div class="n p" style="right:55px;top:249px">246</div>
<div class="bl" style="top:266px">买四</div><div class="n g p" style="left:1754px;top:264px">12.34</div><div class="n p" style="right:55px;top:264px">52</div>
<div class="bl" style="top:281px">买五</div><div class="n g p" style="left:1754px;top:279px">12.33</div><div class="n p" style="right:55px;top:279px">30</div>
<div class="ln" style="top:296px"></div>

<!-- stats -->
<div class="l p" style="left:1668px;top:300px">最新</div><div class="n g p" style="right:130px;top:300px">12.38</div><div class="l p" style="left:1797px;top:300px">均价</div><div class="n g p" style="right:7px;top:300px">12.11</div>
<div class="l p" style="left:1668px;top:318px">涨幅</div><div class="n g p" style="right:130px;top:318px">-1.35%</div><div class="l p" style="left:1797px;top:318px">涨跌</div><div class="n g p" style="right:7px;top:318px"><small style="font-size:9px">▼</small>0.17</div>
<div class="l p" style="left:1668px;top:336px">总手</div><div class="n p" style="right:130px;top:336px">38.78<span style="position:static;font-weight:normal">万</span></div><div class="l p" style="left:1797px;top:336px">金额</div><div class="n c p" style="right:7px;top:336px">4.70<span style="position:static;font-weight:normal">亿</span></div>
<div class="l p" style="left:1668px;top:354px">换手*</div><div class="n p" style="right:130px;top:354px">1.44%</div><div class="l p" style="left:1797px;top:354px">量比</div><div class="n rd p" style="right:7px;top:354px">1.10</div>
<div class="l p" style="left:1668px;top:372px">最高</div><div class="n g p" style="right:130px;top:372px">12.53</div><div class="l p" style="left:1797px;top:372px">最低</div><div class="n g p" style="right:7px;top:372px">11.84</div>
<div class="l p" style="left:1668px;top:390px">今开</div><div class="n g p" style="right:130px;top:390px">12.39</div><div class="l p" style="left:1797px;top:390px">昨收</div><div class="n p" style="right:7px;top:390px">12.55</div>
<div class="l p" style="left:1668px;top:408px">涨停</div><div class="n rd p" style="right:130px;top:408px">13.81</div><div class="l p" style="left:1797px;top:408px">跌停</div><div class="n g p" style="right:7px;top:408px">11.30</div>
<div class="l p" style="left:1668px;top:426px">外盘</div><div class="n rd p" style="right:130px;top:426px">16.37<span style="position:static;font-weight:normal">万</span></div><div class="l p" style="left:1797px;top:426px">内盘</div><div class="n g p" style="right:7px;top:426px">22.41<span style="position:static;font-weight:normal">万</span></div>
<div class="l p" style="left:1668px;top:444px">净资产</div><div class="n p" style="right:130px;top:444px">9.46</div><div class="l p" style="left:1797px;top:444px;font-size:12px">ROE</div><div class="n p" style="right:7px;top:444px">6.50%</div>
<div class="l p" style="left:1668px;top:462px">收益㈡</div><div class="n p" style="right:130px;top:462px">0.595</div><div class="l p" style="left:1797px;top:462px;font-size:12px">PE(动)*</div><div class="n p" style="right:7px;top:462px">10.40</div>
<div class="l p" style="left:1668px;top:480px">股息<sup style="font-size:8px;color:#779">TTM</sup></div><div class="n p" style="right:130px;top:480px">0.08</div><div class="l p" style="left:1797px;top:480px">股息率<sup style="font-size:8px;color:#779">TTM</sup></div><div class="n p" style="right:7px;top:480px">0.66%</div>
<div class="l p" style="left:1668px;top:498px">总股本</div><div class="n p" style="right:130px;top:498px">31.11<span style="position:static;font-weight:normal">亿</span></div><div class="l p" style="left:1797px;top:498px">总值</div><div class="n p" style="right:7px;top:498px">385.2<span style="position:static;font-weight:normal">亿</span></div>
<div class="l p" style="left:1668px;top:516px">流通股</div><div class="n p" style="right:130px;top:516px">26.86<span style="position:static;font-weight:normal">亿</span></div><div class="l p" style="left:1797px;top:516px">流值</div><div class="n p" style="right:7px;top:516px">332.5<span style="position:static;font-weight:normal">亿</span></div>
<div style="left:1762px;top:536px;width:57px;height:6px;background:#1c1c1c;border:0"></div>
<svg style="position:absolute;left:1785px;top:536px" width="12" height="6"><path d="M1 6L6 1L11 6Z" fill="#888"/></svg>
<div class="ln" style="top:543px"></div>

<!-- ticks -->
<div class="n p" style="left:1668px;top:545px">14:56</div><div class="n g p" style="left:1741px;top:545px">12.36</div><div class="n rd p" style="right:52px;top:545px">692</div><div class="n p" style="right:10px;top:545px">18</div>
<div class="p" style="left:1687px;top:565px;font-size:11px;color:#666">:18</div><div class="n g p" style="left:1741px;top:565px">12.36</div><div class="n rd p" style="right:52px;top:565px">47</div><div class="n p" style="right:10px;top:565px">5</div>
<div class="p" style="left:1687px;top:585px;font-size:11px;color:#666">:21</div><div class="n g p" style="left:1741px;top:585px">12.37</div><div class="n rd p" style="right:52px;top:585px">3</div><div class="n p" style="right:10px;top:585px">2</div>
<div class="p" style="left:1687px;top:605px;font-size:11px;color:#666">:24</div><div class="n g p" style="left:1741px;top:605px">12.36</div><div class="n g p" style="right:52px;top:605px">4</div><div class="n p" style="right:10px;top:605px">2</div>
<div class="p" style="left:1687px;top:625px;font-size:11px;color:#666">:27</div><div class="n g p" style="left:1741px;top:625px">12.37</div><div class="n rd p" style="right:52px;top:625px">54</div><div class="n p" style="right:10px;top:625px">8</div>
<div class="p" style="left:1687px;top:645px;font-size:11px;color:#666">:30</div><div class="n g p" style="left:1741px;top:645px">12.37</div><div class="n g p" style="right:52px;top:645px">87</div><div class="n p" style="right:10px;top:645px">6</div>
<div class="p" style="left:1687px;top:665px;font-size:11px;color:#666">:33</div><div class="n g p" style="left:1741px;top:665px">12.36</div><div class="n g p" style="right:52px;top:665px">25</div><div class="n p" style="right:10px;top:665px">7</div>
<div class="p" style="left:1687px;top:685px;font-size:11px;color:#666">:36</div><div class="n g p" style="left:1741px;top:685px">12.37</div><div class="n rd p" style="right:52px;top:685px">13</div><div class="n p" style="right:10px;top:685px">4</div>
<div class="p" style="left:1687px;top:705px;font-size:11px;color:#666">:39</div><div class="n g p" style="left:1741px;top:705px">12.36</div><div class="n g p" style="right:52px;top:705px">25</div><div class="n p" style="right:10px;top:705px">6</div>
<div class="p" style="left:1687px;top:726px;font-size:11px;color:#666">:42</div><div class="n g p" style="left:1741px;top:726px">12.36</div><div class="n g p" style="right:52px;top:726px">29</div><div class="n p" style="right:10px;top:726px">10</div>
<div class="p" style="left:1687px;top:746px;font-size:11px;color:#666">:45</div><div class="n g p" style="left:1741px;top:746px">12.36</div><div class="n g p" style="right:52px;top:746px">163</div><div class="n p" style="right:10px;top:746px">7</div>
<div class="p" style="left:1687px;top:766px;font-size:11px;color:#666">:48</div><div class="n g p" style="left:1741px;top:766px">12.37</div><div class="n rd p" style="right:52px;top:766px">2</div><div class="n p" style="right:10px;top:766px">1</div>
<div class="p" style="left:1687px;top:786px;font-size:11px;color:#666">:51</div><div class="n g p" style="left:1741px;top:786px">12.37</div><div class="n rd p" style="right:52px;top:786px">17</div><div class="n p" style="right:10px;top:786px">8</div>
<div class="p" style="left:1687px;top:806px;font-size:11px;color:#666">:54</div><div class="n g p" style="left:1741px;top:806px">12.37</div><div class="n rd p" style="right:52px;top:806px">49</div><div class="n p" style="right:10px;top:806px">11</div>
<div class="p" style="left:1687px;top:826px;font-size:11px;color:#666">:57</div><div class="n g p" style="left:1741px;top:826px">12.36</div><div class="n g p" style="right:52px;top:826px">104</div><div class="n p" style="right:10px;top:826px">14</div>
<div class="n p" style="left:1668px;top:846px">14:57</div><div class="n g p" style="left:1741px;top:846px">12.37</div><div class="n rd p" style="right:52px;top:846px">23</div><div class="n p" style="right:10px;top:846px">7</div>
<div class="n p" style="left:1668px;top:866px">15:00</div><div class="n g p" style="left:1741px;top:866px">12.38</div><div class="n rd p" style="right:52px;top:866px">2090</div><div class="n p" style="right:10px;top:866px">206</div>
<div style="left:1663px;top:844px;width:256px;border-top:1px dashed #444"></div>
<div style="left:1663px;top:864px;width:256px;border-top:1px dashed #444"></div>
<svg style="position:absolute;left:1775px;top:580px" width="16" height="310">
<defs><path id="up" d="M-4 -3L0 -7L4 -3H2V7H-2V-3Z" fill="#ff5555"/><path id="dn" d="M-4 3L0 7L4 3H2V-7H-2V3Z" fill="#33dd66"/></defs>
<use href="#up" x="7.500" y="14"/><use href="#dn" x="7.500" y="34"/><use href="#up" x="7.500" y="54"/><use href="#dn" x="7.500" y="94"/><use href="#up" x="7.500" y="114"/><use href="#dn" x="7.500" y="134"/><use href="#up" x="7.500" y="195"/><use href="#dn" x="7.500" y="255"/><use href="#up" x="7.500" y="275"/><use href="#up" x="7.500" y="295"/>
</svg>

<!-- right tabs -->
<div style="left:1663px;top:886px;width:256px;height:22px;background:#1a1a1a"></div>
<div class="tab" style="left:1663px;top:886px;height:22px;line-height:22px;width:48px;background:#333;color:#ddd">分笔</div>
<div class="tab" style="left:1711px;top:886px;height:22px;line-height:22px;width:48px">分价</div>
<div class="tab" style="left:1759px;top:886px;height:22px;line-height:22px;width:48px">分时</div>
<div class="tab" style="left:1807px;top:886px;height:22px;line-height:22px;width:48px">异动</div>
</body></html>
